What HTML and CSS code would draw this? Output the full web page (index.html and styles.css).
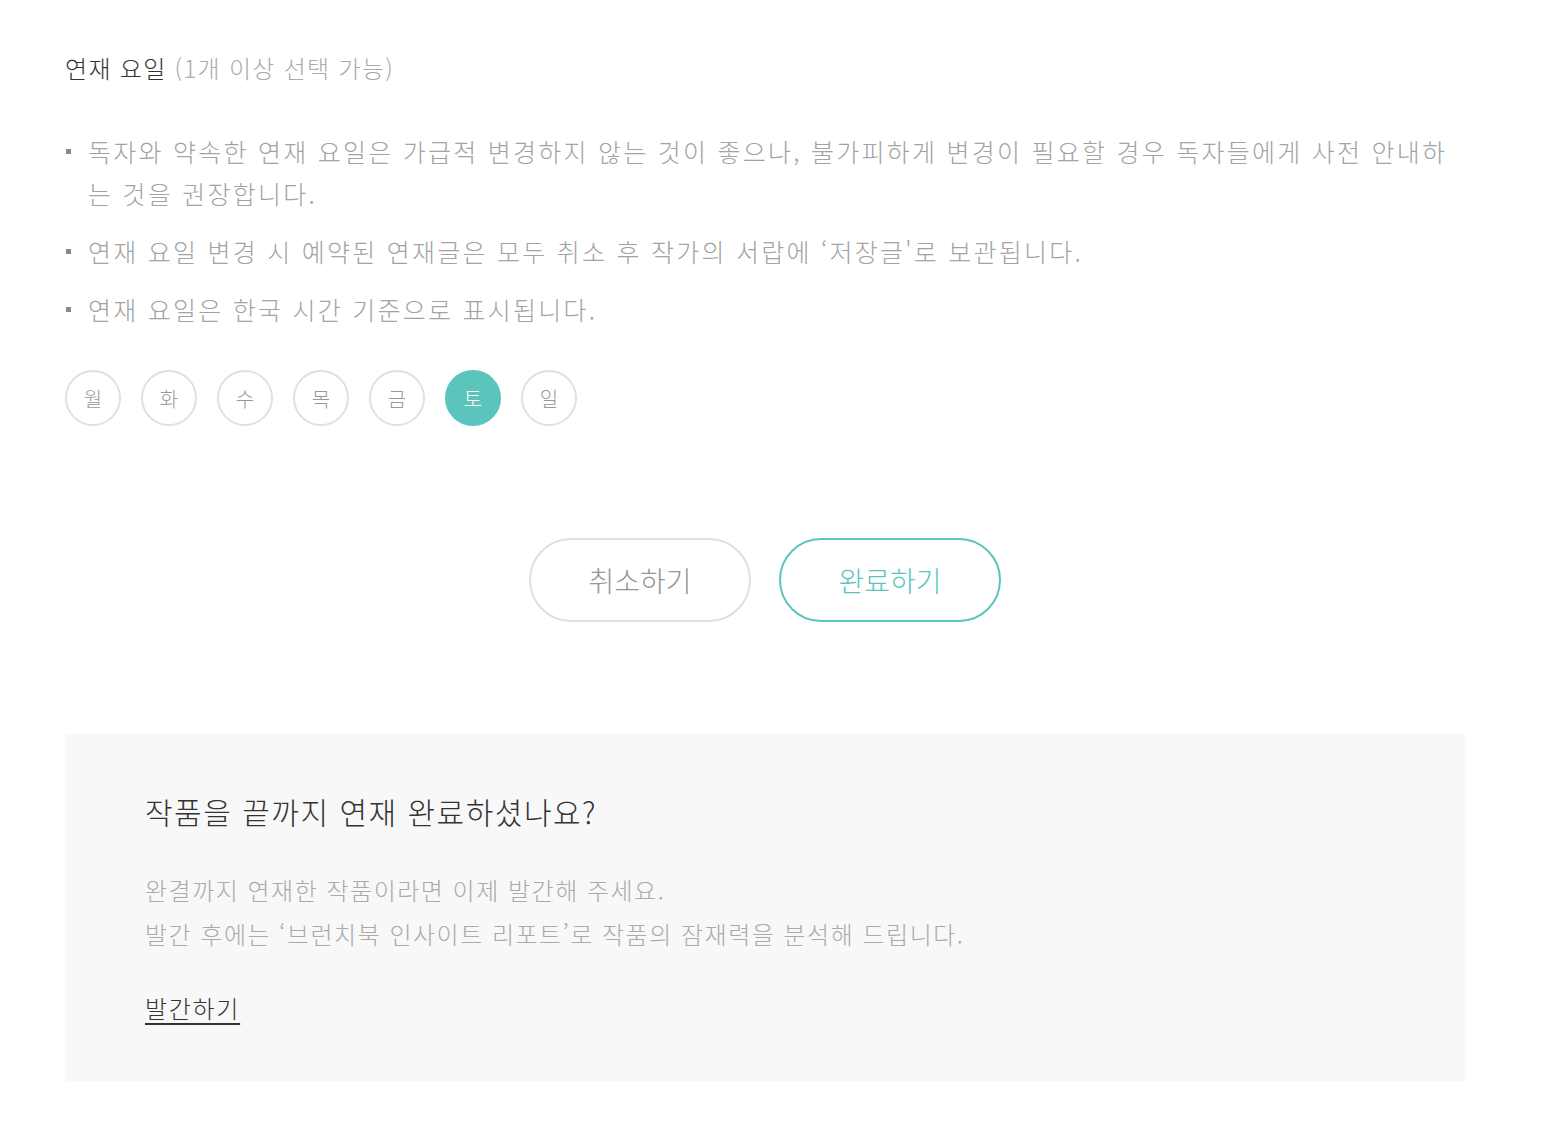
FILE: index.html
```html
<!DOCTYPE html>
<html lang="ko">
<head>
<meta charset="utf-8">
<title>연재 요일</title>
<link rel="stylesheet" href="styles.css">
</head>
<body>
<div class="page">
  <h2 class="label">연재 요일 <span class="sub">(1개 이상 선택 가능)</span></h2>
  <ul class="notes">
    <li>독자와 약속한 연재 요일은 가급적 변경하지 않는 것이 좋으나, 불가피하게 변경이 필요할 경우 독자들에게 사전 안내하는 것을 권장합니다.</li>
    <li>연재 요일 변경 시 예약된 연재글은 모두 취소 후 작가의 서랍에 ‘저장글'로 보관됩니다.</li>
    <li>연재 요일은 한국 시간 기준으로 표시됩니다.</li>
  </ul>
  <div class="days">
    <button class="day">월</button>
    <button class="day">화</button>
    <button class="day">수</button>
    <button class="day">목</button>
    <button class="day">금</button>
    <button class="day on">토</button>
    <button class="day">일</button>
  </div>
  <div class="actions">
    <button class="btn cancel">취소하기</button>
    <button class="btn done">완료하기</button>
  </div>
  <div class="box">
    <h3 class="box-title">작품을 끝까지 연재 완료하셨나요?</h3>
    <p class="box-text">완결까지 연재한 작품이라면 이제 발간해 주세요.<br>발간 후에는 ‘브런치북 인사이트 리포트’로 작품의 잠재력을 분석해 드립니다.</p>
    <a class="box-link" href="#">발간하기</a>
  </div>
</div>
</body>
</html>
```
FILE: styles.css
```css
html, body {
  margin: 0;
  padding: 0;
  background: #fff;
}
body {
  font-family: "Noto Sans CJK KR", "Noto Sans", sans-serif;
  font-weight: 300;
  color: #333;
}
.page {
  width: 1400px;
  padding: 50px 0 60px 65px;
}
.label {
  margin: 0;
  font-size: 24px;
  line-height: 36px;
  font-weight: 300;
  letter-spacing: 1.3px;
  color: #333;
}
.sub {
  color: #aaa;
}
.notes {
  list-style: none;
  margin: 44px 0 0;
  padding: 0;
}
.notes li {
  position: relative;
  padding-left: 23px;
  font-size: 25px;
  line-height: 42px;
  letter-spacing: 2.25px;
  color: #a3a3a3;
  margin-bottom: 16px;
}
.notes li:last-child {
  margin-bottom: 0;
}
.notes li::before {
  content: "";
  position: absolute;
  left: 1px;
  top: 19px;
  width: 5px;
  height: 5px;
  background: #888;
}
.days {
  display: flex;
  gap: 20px;
  margin-top: 40px;
}
.day {
  width: 56px;
  height: 56px;
  border-radius: 50%;
  border: 2px solid #e0e0e0;
  background: #fff;
  font-family: inherit;
  font-weight: 300;
  font-size: 20px;
  color: #999;
  padding: 0;
  display: flex;
  align-items: center;
  justify-content: center;
}
.day.on {
  background: #5bc5bd;
  border-color: #5bc5bd;
  color: #fff;
}
.actions {
  display: flex;
  justify-content: center;
  gap: 28px;
  margin-top: 112px;
}
.btn {
  width: 222px;
  height: 84px;
  border-radius: 42px;
  background: #fff;
  font-family: inherit;
  font-weight: 300;
  font-size: 28px;
  padding: 0;
}
.cancel {
  border: 2px solid #e0e0e0;
  color: #959595;
}
.done {
  border: 2px solid #5bc5bd;
  color: #5bc5bd;
}
.box {
  margin-top: 112px;
  background: #f8f8f8;
  padding: 55px 80px 52px;
  height: 347px;
  box-sizing: border-box;
}
.box-title {
  margin: 0;
  font-size: 30px;
  line-height: 45px;
  font-weight: 300;
  letter-spacing: 1.5px;
  color: #333;
}
.box-text {
  margin: 34px 0 0;
  font-size: 24px;
  line-height: 44px;
  letter-spacing: 1.5px;
  color: #aaa;
}
.box-link {
  display: inline-block;
  margin-top: 31px;
  font-size: 24px;
  line-height: 42px;
  letter-spacing: 1.7px;
  color: #333;
  text-decoration: underline;
  text-decoration-thickness: 2px;
  text-underline-offset: 5px;
}
```
